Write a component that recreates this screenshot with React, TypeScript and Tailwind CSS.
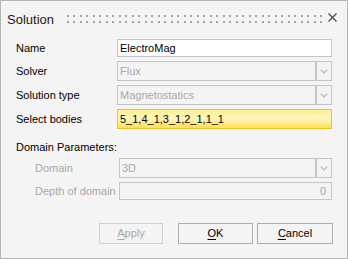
import React from "react";

const dots = Array.from({ length: 40 }, (_, i) => Math.round(i * 6.49));

function Chevron() {
  return (
    <svg width="8" height="5" viewBox="0 0 8 5">
      <polyline points="0.8,0.8 4,4 7.2,0.8" fill="none" stroke="#c4c4c4" strokeWidth="1.6" />
    </svg>
  );
}

function Combo({ value, width }: { value: string; width: string }) {
  return (
    <div className={`flex h-[20px] ${width}`}>
      <div className="flex flex-1 items-center border border-[#c6c6c6] bg-[#f4f4f4] pl-[2px] text-[#a8a8a8]">
        {value}
      </div>
      <div className="flex w-[16px] items-center justify-center border border-[#c6c6c6] bg-[#f4f4f4]">
        <Chevron />
      </div>
    </div>
  );
}

function Btn({ label, mn, w, disabled }: { label: string; mn: string; w: string; disabled?: boolean }) {
  return (
    <button
      className={`flex h-[21px] items-center justify-center border bg-[#f4f4f4] ${w} ${
        disabled ? "border-[#cfcfcf] text-[#a8a8a8]" : "border-[#adadad] text-black"
      }`}
    >
      <span className="underline underline-offset-2">{mn}</span>
      {label}
    </button>
  );
}

export default function App() {
  return (
    <div className="flex h-[259px] w-[348px] flex-col border border-[#b4b4b4] bg-[#f4f4f4] font-['Liberation_Sans',Arial,sans-serif] text-[11px] leading-[13px] text-black">
      {/* title bar */}
      <div className="flex h-[38px] items-start pl-[6px]">
        <div className="mt-[11px] w-[59px] text-[13px] leading-[15px] text-[#1a1a1a]">Solution</div>
        <svg width="257" height="8" className="mt-[14px]">
          {dots.map((x) => (
            <g key={x} fill="#a4a4a4">
              <rect x={x + 1} y={0} width="2" height="2" />
              <rect x={x + 1} y={6} width="2" height="2" />
            </g>
          ))}
        </svg>
        <svg width="9" height="9" className="ml-[5px] mt-[12px]">
          <path d="M0.5 0.5L8.5 8.5M8.5 0.5L0.5 8.5" stroke="#444" strokeWidth="1.1" />
        </svg>
      </div>

      <div className="flex flex-col gap-[4px] pl-[15px]">
        <div className="flex items-center">
          <div className="w-[101px]">Name</div>
          <div className="flex h-[18px] w-[215px] items-center border border-[#c6c6c6] bg-white pl-[2px]">
            ElectroMag
          </div>
        </div>
        <div className="flex items-center">
          <div className="w-[101px]">Solver</div>
          <Combo value="Flux" width="w-[215px]" />
        </div>
        <div className="flex items-center">
          <div className="w-[101px]">Solution type</div>
          <Combo value="Magnetostatics" width="w-[215px]" />
        </div>
        <div className="flex items-center">
          <div className="w-[101px]">Select bodies</div>
          <div className="flex h-[20px] w-[215px] items-center border border-[#f0c419] bg-[linear-gradient(#ffef8c,#fff6c0_45%,#ffdf55)] pl-[2px]">
            5_1,4_1,3_1,2_1,1_1
          </div>
        </div>
      </div>

      <div className="mt-[12px] pl-[15px]">Domain Parameters:</div>

      <div className="mt-[4px] flex flex-col gap-[4px] pl-[34px] text-[#a8a8a8]">
        <div className="flex items-center">
          <div className="w-[84px]">Domain</div>
          <Combo value="3D" width="w-[213px]" />
        </div>
        <div className="flex items-center">
          <div className="w-[84px]">Depth of domain</div>
          <div className="flex h-[18px] w-[213px] items-center justify-end border border-[#c6c6c6] pr-[5px]">
            0
          </div>
        </div>
      </div>

      <div className="mt-auto flex pb-[14px] pl-[98px]">
        <Btn label="pply" mn="A" w="w-[64px]" disabled />
        <div className="ml-[15px]">
          <Btn label="K" mn="O" w="w-[75px]" />
        </div>
        <div className="ml-[4px]">
          <Btn label="ancel" mn="C" w="w-[76px]" />
        </div>
      </div>
    </div>
  );
}
